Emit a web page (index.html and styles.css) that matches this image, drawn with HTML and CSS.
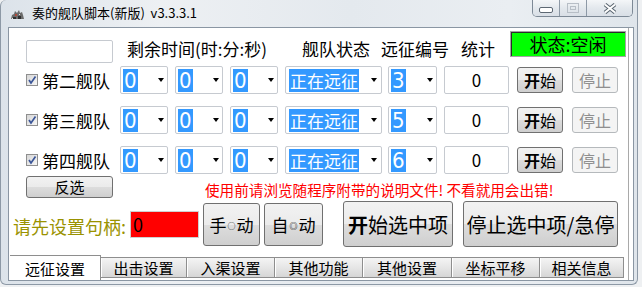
FILE: index.html
```html
<!DOCTYPE html>
<html lang="zh-CN">
<head>
  <meta charset="UTF-8" />
  <title>奏的舰队脚本(新版)</title>
  <link rel="stylesheet" href="styles.css">
</head>
<body>
  <div class="window">
    <div class="titlebar">
      <svg class="app-icon" width="15" height="12" viewBox="0 0 15 12">
        <path d="M1 11 L2 7 L4 6 L5 3 L7 5 L9 2 L10 5 L12 4 L13 7 L14 11 Z" fill="#6b6b6b"/>
        <path d="M3 9 h3 v2 h-3 Z M8 8 h3 v3 h-3 Z" fill="#2f2f2f"/>
        <path d="M5 6 h2 v2 h-2 Z" fill="#b04a3a"/>
        <path d="M9 6 h1 v1 h-1 Z M2 10 h1 v1 h-1 Z" fill="#e8e8e8"/>
      </svg>
      <span class="title">奏的舰队脚本(新版)  v3.3.3.1</span>
      <div class="caption">
        <span class="cap-btn cap-min">
          <svg width="14" height="6" viewBox="0 0 14 6"><rect x="0.5" y="0.5" width="13" height="5" rx="1.5" fill="#fff" stroke="#5d6873"/></svg>
        </span>
        <span class="cap-btn cap-max">
          <svg width="12" height="10" viewBox="0 0 12 10"><rect x="0.5" y="0.5" width="11" height="9" fill="none" stroke="#b7bec6"/><rect x="3.5" y="3.5" width="5" height="3" fill="none" stroke="#b7bec6"/></svg>
        </span>
        <span class="cap-btn cap-close">
          <svg width="14" height="11" viewBox="0 0 14 11"><path d="M2 1.5 L12 9.5 M12 1.5 L2 9.5" stroke="#5d6873" stroke-width="4"/><path d="M2 1.5 L12 9.5 M12 1.5 L2 9.5" stroke="#fff" stroke-width="2"/></svg>
        </span>
      </div>
    </div>

    <div class="client">
      <div class="head-row">
        <span class="textbox head-box"></span>
        <span class="col-title col-time">剩余时间(时:分:秒)</span>
        <span class="col-title col-state">舰队状态</span>
        <span class="col-title col-no">远征编号</span>
        <span class="col-title col-count">统计</span>
        <span class="status">状态:空闲</span>
      </div>

      <div class="fleet-row first">
        <span class="check"><svg width="10" height="10" viewBox="0 0 10 10"><path d="M2 5 L4 8 L8.5 1.5" fill="none" stroke="#3a5597" stroke-width="1.7"/></svg></span>
        <span class="fleet-name">第二舰队</span>
        <span class="combo num"><span class="sel">0</span><i class="arrow"></i></span>
        <span class="combo num"><span class="sel">0</span><i class="arrow"></i></span>
        <span class="combo num"><span class="sel">0</span><i class="arrow"></i></span>
        <span class="combo state"><span class="sel">正在远征</span><i class="arrow"></i></span>
        <span class="combo no"><span class="sel">3</span><i class="arrow"></i></span>
        <span class="textbox count">0</span>
        <button class="btn start"><b>开</b>始</button>
        <button class="btn stop disabled">停止</button>
      </div>

      <div class="fleet-row">
        <span class="check"><svg width="10" height="10" viewBox="0 0 10 10"><path d="M2 5 L4 8 L8.5 1.5" fill="none" stroke="#3a5597" stroke-width="1.7"/></svg></span>
        <span class="fleet-name">第三舰队</span>
        <span class="combo num"><span class="sel">0</span><i class="arrow"></i></span>
        <span class="combo num"><span class="sel">0</span><i class="arrow"></i></span>
        <span class="combo num"><span class="sel">0</span><i class="arrow"></i></span>
        <span class="combo state"><span class="sel">正在远征</span><i class="arrow"></i></span>
        <span class="combo no"><span class="sel">5</span><i class="arrow"></i></span>
        <span class="textbox count">0</span>
        <button class="btn start"><b>开</b>始</button>
        <button class="btn stop disabled">停止</button>
      </div>

      <div class="fleet-row">
        <span class="check"><svg width="10" height="10" viewBox="0 0 10 10"><path d="M2 5 L4 8 L8.5 1.5" fill="none" stroke="#3a5597" stroke-width="1.7"/></svg></span>
        <span class="fleet-name">第四舰队</span>
        <span class="combo num"><span class="sel">0</span><i class="arrow"></i></span>
        <span class="combo num"><span class="sel">0</span><i class="arrow"></i></span>
        <span class="combo num"><span class="sel">0</span><i class="arrow"></i></span>
        <span class="combo state"><span class="sel">正在远征</span><i class="arrow"></i></span>
        <span class="combo no"><span class="sel">6</span><i class="arrow"></i></span>
        <span class="textbox count">0</span>
        <button class="btn start"><b>开</b>始</button>
        <button class="btn stop disabled">停止</button>
      </div>

      <div class="misc-row">
        <button class="btn invert">反选</button>
        <span class="notice">使用前请浏览随程序附带的说明文件! 不看就用会出错!</span>
      </div>

      <div class="action-row">
        <span class="handle-label">请先设置句柄:</span>
        <span class="handle-box">0</span>
        <button class="btn manual">手<span class="dot">○</span>动</button>
        <button class="btn auto">自<span class="dot">◎</span>动</button>
        <button class="btn run-sel"><b>开</b>始选中项</button>
        <button class="btn stop-sel">停止选中项/急停</button>
      </div>

      <div class="tabs">
        <span class="tab active t1">远征设置</span>
        <span class="tab t2">出击设置</span>
        <span class="tab t3">入渠设置</span>
        <span class="tab t4">其他功能</span>
        <span class="tab t5">其他设置</span>
        <span class="tab t6">坐标平移</span>
        <span class="tab t7">相关信息</span>
      </div>
    </div>
  </div>
</body>
</html>
```

FILE: styles.css
```css
* {
  box-sizing: border-box;
}

html, body {
  margin: 0;
  padding: 0;
}

body {
  width: 642px;
  height: 287px;
  overflow: hidden;
  background: #eef0f2;
  font-family: "Noto Sans CJK SC", "Liberation Sans", sans-serif;
  color: #000;
}

/* window frame */
.window {
  width: 638px;
  height: 285px;
  border: 1px solid #8d99a6;
  border-top: none;
  border-radius: 6px 0 6px 6px;
  background: linear-gradient(to right, #dce3ea 0%, #edf0f3 25%, #e4e9ee 55%, #eaeef2 80%, #dfe5eb 100%);
}

.titlebar {
  display: flex;
  align-items: flex-start;
  height: 27px;
}

.app-icon {
  margin: 8px 0 0 9px;
}

.title {
  margin: 4px 0 0 7px;
  font-size: 13px;
  line-height: 18px;
  white-space: pre;
}

.caption {
  display: flex;
  margin-left: auto;
  margin-right: 4px;
  height: 17px;
  border: 1px solid #7d8996;
  border-top: none;
  border-radius: 0 0 5px 5px;
  overflow: hidden;
}

.cap-btn {
  display: flex;
  align-items: center;
  justify-content: center;
  height: 16px;
  background: linear-gradient(#f4f6f8, #e3e8ed 50%, #d9dfe6);
}

.cap-min {
  width: 27px;
  border-right: 1px solid #8d99a6;
  align-items: flex-end;
  padding-bottom: 3px;
}

.cap-max {
  width: 27px;
  border-right: 1px solid #8d99a6;
}

.cap-close {
  width: 45px;
}

/* client area */
.client {
  margin-left: 7px;
  width: 626px;
  height: 254px;
  border: 1px solid #8a96a3;
  background: #fff;
  box-shadow: inset -4px 0 0 #fff, inset -5px 0 0 #a9a9a9;
}

.textbox {
  border: 1px solid #c6cad0;
  border-radius: 2px;
  background: #fff;
}

.head-row {
  display: flex;
  align-items: flex-start;
  height: 33px;
  margin-top: 3px;
  padding-left: 17px;
}

.head-box {
  width: 87px;
  height: 23px;
  margin-top: 9px;
}

.col-title {
  margin-top: 6px;
  font-size: 17px;
  line-height: 24px;
  white-space: nowrap;
}

.col-time {
  margin-left: 14px;
  width: 175px;
}

.col-state {
  width: 79px;
}

.col-no {
  width: 80px;
}

.col-count {
  width: 49px;
}

.status {
  width: 116px;
  height: 26px;
  border: 1px solid #a3a3a3;
  box-shadow: inset 1px 1px 0 #2b2b2b;
  background: #00ff00;
  font-size: 18px;
  line-height: 24px;
  text-align: center;
}

/* fleet rows */
.fleet-row {
  display: flex;
  align-items: center;
  height: 28px;
  margin-top: 12px;
  padding-left: 17px;
}

.fleet-row.first {
  margin-top: 2px;
}

.check {
  display: flex;
  align-items: center;
  justify-content: center;
  width: 12px;
  height: 12px;
  border: 1px solid #8f8f8f;
  background: linear-gradient(135deg, #d6d6d6, #f7f7f7);
}

.fleet-name {
  width: 78px;
  margin-left: 4px;
  font-size: 17px;
  line-height: 24px;
  padding-top: 2px;
}

.combo {
  display: flex;
  align-items: center;
  height: 28px;
  margin-left: 7px;
  padding-left: 2px;
  border: 1px solid #c6cad0;
  border-radius: 2px;
  background: #fff;
}

.fleet-name + .combo {
  margin-left: 0;
}

.combo.num {
  width: 48px;
}

.combo.state {
  width: 97px;
}

.combo.no {
  width: 49px;
  margin-left: 6px;
}

.sel {
  background: #3399ff;
  color: #fff;
  font-family: "Liberation Sans Narrow", "DejaVu Sans Condensed", "Liberation Sans", sans-serif;
  font-size: 22px;
  line-height: 23px;
  padding: 0 1px;
}

.combo.state .sel {
  font-family: "Noto Sans CJK SC", sans-serif;
  font-size: 17px;
  padding: 0 1px;
  margin-left: 1px;
}

.arrow {
  margin-left: auto;
  margin-right: 3px;
  border-left: 3.5px solid transparent;
  border-right: 3.5px solid transparent;
  border-top: 4px solid #000;
}

.combo.state .arrow {
  margin-right: 4px;
}

.count {
  width: 65px;
  height: 28px;
  margin-left: 7px;
  font-size: 17px;
  line-height: 26px;
  text-align: center;
}

/* buttons */
.btn {
  font-family: inherit;
  color: #000;
  padding: 0;
  border: 1px solid #707070;
  border-radius: 3px;
  background: linear-gradient(#f2f2f2 0%, #ebebeb 50%, #dddddd 50%, #cfcfcf 100%);
  white-space: nowrap;
}

.btn.disabled {
  border-color: #b5b9bc;
  background: #f4f4f4;
  color: #8f8f8f;
}

.start, .stop {
  width: 46px;
  height: 26px;
  font-size: 16px;
  line-height: 22px;
}

.start {
  margin-left: 8px;
}

.stop {
  margin-left: 9px;
}

.misc-row {
  display: flex;
  align-items: center;
  height: 22px;
  margin-top: 2px;
  padding-left: 17px;
}

.invert {
  width: 87px;
  height: 22px;
  font-size: 15px;
  line-height: 18px;
}

.notice {
  margin-left: 92px;
  padding-top: 5px;
  color: #ff0000;
  font-size: 14.6px;
  white-space: nowrap;
}

.action-row {
  display: flex;
  align-items: center;
  height: 46px;
  margin-top: 3px;
  padding-left: 4px;
}

.handle-label {
  width: 117px;
  padding-top: 3px;
  color: #9a9200;
  font-size: 18px;
  white-space: nowrap;
}

.handle-box {
  width: 69px;
  height: 27px;
  padding-left: 2px;
  border: 1px solid #cfcfcf;
  background: #ff0000;
  font-size: 18px;
  line-height: 25px;
}

.manual, .auto {
  height: 43px;
  margin-left: 4px;
  font-size: 17px;
}

.manual {
  width: 57px;
}

.auto {
  width: 59px;
}

.dot {
  font-size: 8px;
  vertical-align: 3px;
  margin: 0 1px;
}

.run-sel, .stop-sel {
  height: 46px;
  font-size: 20px;
}

.run-sel {
  width: 110px;
  margin-left: 20px;
}

.stop-sel {
  width: 155px;
  margin-left: 10px;
}

/* tab strip */
.tabs {
  display: flex;
  align-items: flex-start;
  height: 25px;
  margin-top: 8px;
  margin-left: 1px;
}

.tab {
  height: 21px;
  margin-top: 2px;
  border: 1px solid #8e8e8e;
  border-left: none;
  box-shadow: inset 1px 0 0 #fff;
  background: linear-gradient(#f4f4f4, #e6e6e6 50%, #d6d6d6);
  font-size: 15px;
  line-height: 19px;
  text-align: center;
  white-space: nowrap;
}

.tab.active {
  height: 25px;
  margin-top: 0;
  padding-top: 3px;
  border-bottom: none;
  box-shadow: none;
  background: #fff;
}

.t1 { width: 91px; }
.t2 { width: 86px; }
.t3 { width: 88px; }
.t4 { width: 88px; }
.t5 { width: 89px; }
.t6 { width: 88px; }
.t7 { width: 84px; }
```
